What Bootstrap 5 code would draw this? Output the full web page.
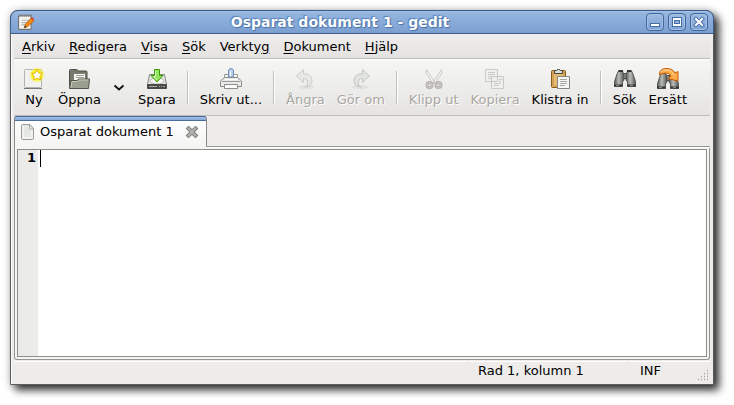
<!DOCTYPE html>
<html lang="sv">
<head>
<meta charset="utf-8">
<meta name="viewport" content="width=device-width, initial-scale=1">
<title>Osparat dokument 1 - gedit</title>
<link rel="stylesheet" href="https://cdn.jsdelivr.net/npm/bootstrap@5.3.0/dist/css/bootstrap.min.css">
<style>
body{background:#fff;color:#000;font:13px/16px "DejaVu Sans",sans-serif;padding:10px 20px 20px 10px}
button{font:inherit;color:inherit;background:none;border:0;padding:0}
svg{display:block}
.win{background:#edecea;border:1px solid #5c5c5c;border-radius:8px 8px 0 0;
  box-shadow:0 0 8px rgba(0,0,0,.22),5px 5px 9px rgba(0,0,0,.8)}
.titlebar{height:24px;margin:-1px -1px 0;padding:0 5px 0 7px;border:1px solid #3a5c8a;border-radius:8px 8px 0 0;
  background:linear-gradient(#a9c4e8 0,#95b5e0 2px,#7b9fd0);}
.titlebar h1{font-size:14px;line-height:22px;font-weight:700;color:#fff;text-shadow:0 0 1px #3f689f,1px 1px 1px #4a73ab,-1px -1px 1px #5d86bd}
.wbtn{width:18px;height:18px;border:1px solid #40669c;border-radius:4px;background:linear-gradient(#9dbbe3,#7fa3d4);box-shadow:inset 0 0 0 1px #a5c0e5}
.inner{padding:0 3px 0 2px;border:solid #fafaf9;border-width:0 0 0 1px}
.menubar{height:25px;padding:1px 0 0 1px;background:linear-gradient(#eeedec,#e4e3e1);border-bottom:1px solid #bdbbb8}
.menubar button{padding:0 7px}
.menubar u{text-underline-offset:2px}
.toolbar{height:57px;padding:8px 2px 0;background:linear-gradient(#f6f6f5,#e5e4e2);border-top:1px solid #fff;border-bottom:1px solid #bdbbb8}
.tool{height:40px;min-width:36px;padding:0 6px}
.tool:disabled{color:#aaa7a3;text-shadow:1px 1px 0 #fff}
.tool svg{width:24px;height:24px}
.drop{width:25px;height:40px}
.vline{width:2px;height:33px;margin:3px 5px 0;background:linear-gradient(90deg,#c2c0bd 50%,#fff 50%)}
.doctab{height:31px;width:193px;padding:0 6px 0 5px;border:1px solid #8d8b88;border-top-color:#45699b;border-bottom:0;
  border-radius:3px 3px 0 0;background:linear-gradient(#a3c0e8 0,#86a9da 3px,#4a6e9f 3px,#4a6e9f 4px,#fff 4px,#f4f4f3)}
.tabs-rest{border-bottom:1px solid #979592;box-shadow:0 1px #fff;margin-left:-1px}
.sheet{border:1px solid #979592;border-top:0;border-radius:0 0 3px 3px;padding:2px;background:#f5f5f4}
.view{border:1px solid #8f8d8a;height:calc(100vh - 197px);min-height:100px;background:#fff}
.gutter{width:20px;padding-right:2px;background:#ebebea;font-weight:700}
.view textarea{border:0;outline:0;resize:none;padding:0 2px;font:inherit}
.caret-bar{position:absolute;left:2px;top:0;width:1px;height:17px;background:#000}
.statusbar{height:24px;line-height:17px;padding-top:1px}
.cell{border-top:1px solid #fff;padding-left:10px;margin-left:2px}
.cell-pos{width:160px}
.cell-mode{width:80px}
</style>
<script src="https://cdn.jsdelivr.net/npm/bootstrap@5.3.0/dist/js/bootstrap.bundle.min.js"></script>
</head>
<body class="min-vh-100">
<div class="win">
  <header class="titlebar d-flex align-items-center">
    <svg width="16" height="16" viewBox="1 1 14 14" aria-hidden="true"><rect x="1.500" y="2.500" width="11" height="12" rx="1" fill="#f4f4f1" stroke="#77756f"/><path d="M2 2.500h11" stroke="#77756f" stroke-width="2" stroke-dasharray="1 1"/><path d="M4 6.500h7M4 8.500h6M4 10.500h4" stroke="#b6b6b2"/><path d="M6.500 13l1-3 5-5.500 2.500 2.500-5.500 5z" fill="#f98b13" stroke="#a34c00" stroke-width=".6"/><path d="M12.500 4.500l.8-.8 1.700 2-.8 1z" fill="#e43b2d"/><path d="M6.400 13.200l.8-2 1.200 1.200z" fill="#222"/></svg>
    <h1 class="flex-fill text-center m-0">Osparat dokument 1 - gedit</h1>
    <div class="d-flex gap-1">
      <button class="wbtn" aria-label="Minimera"><svg width="16" height="16" viewBox="0 0 16 16"><rect x="3.500" y="9.500" width="9" height="3" fill="#fff" stroke="#456ea8"/></svg></button>
      <button class="wbtn" aria-label="Maximera"><svg width="16" height="16" viewBox="0 0 16 16"><rect x="3" y="3" width="10" height="10" fill="#456ea8"/><rect x="4" y="4" width="8" height="8" fill="#fff"/><rect x="5.500" y="6.500" width="5" height="3" fill="#8fb0dc" stroke="#456ea8"/></svg></button>
      <button class="wbtn" aria-label="Stäng"><svg width="16" height="16" viewBox="0 0 16 16"><path d="M5 5l6 6M11 5l-6 6" stroke="#456ea8" stroke-width="4" stroke-linecap="square"/><path d="M5 5l6 6M11 5l-6 6" stroke="#fff" stroke-width="2.200" stroke-linecap="square"/></svg></button>
    </div>
  </header>
  <div class="inner">
    <nav class="menubar d-flex">
      <button><u>A</u>rkiv</button><button><u>R</u>edigera</button><button><u>V</u>isa</button><button><u>S</u>ök</button><button>Verkty<u>g</u></button><button><u>D</u>okument</button><button><u>H</u>jälp</button>
    </nav>
    <div class="toolbar d-flex text-nowrap" role="toolbar">
      <button class="tool d-flex flex-column align-items-center"><svg viewBox="0 0 24 24"><defs><radialGradient id="glow"><stop offset=".5" stop-color="#fff200"/><stop offset="1" stop-color="#fff200" stop-opacity="0"/></radialGradient></defs><rect x="2.500" y="1.500" width="17" height="18" rx="1" fill="#f1f2ef" stroke="#b3b5b0"/><path d="M2 20.500h18" stroke="#777"/><circle cx="15" cy="7" r="8" fill="url(#glow)"/><path d="M15 1.500l1.700 3.400 3.800.6-2.700 2.700.6 3.800-3.400-1.800-3.400 1.800.6-3.800-2.700-2.700 3.800-.6z" fill="#fff" stroke="#e1ba00"/></svg>Ny</button>
      <button class="tool d-flex flex-column align-items-center"><svg viewBox="0 0 24 24"><path d="M2.500 19V2.500q0-1 1-1h6q1 0 1.500 1.500h8q1 0 1 1V18z" fill="#767a6b" stroke="#4c5046"/><path d="M6.500 5.500h12v10h-12z" fill="#f7f7f4" stroke="#777b70"/><path d="M9 7.500h8M9 9.500h8" stroke="#9d9e98"/><path d="M2.500 20.500l1.500-8h6l2-1.500h10.500l-1 9.500z" fill="#9b9f8d" stroke="#50544a"/><path d="M4 19.500l1-6h5.500l2-1.500h9" fill="none" stroke="#c6c9ba"/></svg>Öppna</button>
      <button class="drop d-flex align-items-center justify-content-center" aria-label="Öppna senaste"><svg width="12" height="8" viewBox="0 0 12 8"><path d="M1.500 1.500l4.500 4 4.500-4" fill="none" stroke="#111" stroke-width="1.800"/></svg></button>
      <button class="tool d-flex flex-column align-items-center"><svg viewBox="0 0 24 24"><path d="M4.500 6.500h15l2 10h-19z" fill="#e5e6e3" stroke="#888a85"/><ellipse cx="12" cy="13" rx="7" ry="3" fill="#f7f7f6" stroke="#bbb"/><rect x="2" y="16" width="20" height="5" rx="1" fill="#474a47"/><path d="M4 18.500h8M14 18.500h1M16 18.500h1M18 18.500h2" stroke="#aaa"/><path d="M9.500 1.500h5v6h3.500L12 14 6 7.500h3.500z" fill="#91e45c" stroke="#3f9a08"/><path d="M10.500 3v5.500h-2l3.500 3.500" fill="none" stroke="#d6ffbd"/></svg>Spara</button>
      <span class="vline"></span>
      <button class="tool d-flex flex-column align-items-center"><svg viewBox="0 0 24 24"><path d="M9.500 9V3q0-2.500 2.500-2.500T14.500 3v6z" fill="#b9cdea" stroke="#7390bc"/><path d="M11.500 3v5" stroke="#fff"/><path d="M5.500 12V6.500H9M15 6.500h3.500V12" fill="#f7f7f6" stroke="#999b97"/><path d="M5.500 9.500h13l4 3.500v5.500h-21V13z" fill="#e9eae7" stroke="#8b8d88"/><path d="M3 13.500h18" stroke="#999"/><path d="M6 11.500h12" stroke="#fff"/><path d="M5.500 16.500h13v4h-13z" fill="#fafafa" stroke="#8b8d88"/></svg>Skriv ut...</button>
      <span class="vline"></span>
      <button disabled class="tool d-flex flex-column align-items-center"><svg viewBox="0 0 24 24"><ellipse cx="13" cy="19" rx="8" ry="2" fill="#e2e1df"/><path d="M10.500 1.500L3.500 8l7 6.500v-4q5-.5 4 7l-2.500 1.500q7-.5 7-6.500 0-6.500-8.500-7z" fill="#e8e9e4" stroke="#cbccc7"/></svg>Ångra</button>
      <button disabled class="tool d-flex flex-column align-items-center"><svg viewBox="0 0 24 24"><ellipse cx="11" cy="19" rx="8" ry="2" fill="#e2e1df"/><path d="M13.500 1.500l7 6.500-7 6.500v-4q-5-.5-4 7l2.500 1.500q-7-.5-7-6.500 0-6.500 8.500-7z" fill="#e1e4df" stroke="#c3c7c0"/></svg>Gör om</button>
      <span class="vline"></span>
      <button disabled class="tool d-flex flex-column align-items-center"><svg viewBox="0 0 24 24"><path d="M4.500 1.500l8.500 13-2 1L4 5zM19.500 1.500L11 14.500l2 1L20 5z" fill="#efefed" stroke="#c3c3c0" stroke-width=".8"/><g fill="none" stroke="#b5b1b1" stroke-width="3"><circle cx="7.500" cy="17" r="2.500"/><circle cx="16.500" cy="17" r="2.500"/></g><g fill="none" stroke="#d1cccc"><circle cx="7.500" cy="17" r="2.500"/><circle cx="16.500" cy="17" r="2.500"/></g></svg>Klipp ut</button>
      <button disabled class="tool d-flex flex-column align-items-center"><svg viewBox="0 0 24 24"><g fill="#efefed" stroke="#c9c9c6"><path d="M8.500 8.500h12v12h-12zM2.500 1.500h12v12h-12z"/><path d="M5 4.500h7M5 6.500h7M5 8.500h6M5 10.500h4M16 11.500h3M11 15.500h7M11 17.500h5M16 13.500h2"/></g></svg>Kopiera</button>
      <button class="tool d-flex flex-column align-items-center"><svg viewBox="0 0 24 24"><rect x="3.500" y="2.500" width="14" height="17" rx="1" fill="#d3a257" stroke="#8a5a14"/><path d="M6 4.500h9v13H6z" fill="#e4bb74"/><path d="M6.500 5.500v-3h2q0-1 2-1t2 1h2v3z" fill="#dededb" stroke="#444642"/><path d="M9.500 8.500h12v12h-12z" fill="#f5f5f3" stroke="#868883"/><path d="M12 11.500h7M12 13.500h7M12 15.500h7M12 17.500h5" stroke="#a7a9a5"/></svg>Klistra in</button>
      <span class="vline"></span>
      <button class="tool d-flex flex-column align-items-center"><svg viewBox="0 0 24 24"><defs><linearGradient id="tube"><stop stop-color="#565956"/><stop offset=".45" stop-color="#b9bcb7"/><stop offset="1" stop-color="#555855"/></linearGradient><g id="bino"><path d="M9.500 5.500h5v5h-5z" fill="#9a9d98" stroke="#4a4d4a"/><path d="M5.500 3h4l1.500 4v5l-1.500 2v4.500h-8v-5L4 6z" fill="url(#tube)" stroke="#454845" stroke-width=".8"/><path d="M18.500 3h-4L13 7v5l1.500 2v4.500h8v-5L20 6z" fill="url(#tube)" stroke="#454845" stroke-width=".8"/><path d="M5.500 3h4.500M14 3h4.500M1 17.500h8.500M14.500 17.500H23" stroke="#333533" stroke-width="2"/><path d="M3 17.500h3M17 17.500h3" stroke="#8a8d88"/></g></defs><use href="#bino"/></svg>Sök</button>
      <button class="tool d-flex flex-column align-items-center"><svg viewBox="0 0 24 24"><use href="#bino" y="2"/><path d="M3.500 6Q4 .5 10 .5q7 0 9 4.500l3-1.500v9.500l-10-2.500 3-2.500q-1.500-3-5-3-3.500 0-6.500 2z" fill="#fcae4c" stroke="#c95a05"/><path d="M5 4q2-2.500 5.500-2.300 5.500.5 7.500 5.300" fill="none" stroke="#ffd9a0"/></svg>Ersätt</button>
    </div>
    <div class="d-flex">
      <div class="doctab d-flex align-items-center">
        <svg width="16" height="16" viewBox="0 0 16 16" aria-hidden="true"><path d="M1.500 1.500q0-1 1-1H10l3.500 4v10q0 1-1 1h-10q-1 0-1-1z" fill="#e6e8e4" stroke="#9b9d98"/><path d="M3 2v12h9V6" fill="none" stroke="#fff"/><path d="M9.500 1v4h4z" fill="#fff" stroke="#aaa"/></svg>
        <span class="text-nowrap ms-1">Osparat dokument 1</span>
        <button class="ms-auto" aria-label="Stäng dokument"><svg width="16" height="16" viewBox="0 0 16 16"><path d="M4.500 4.500l7 7M11.500 4.500l-7 7" stroke="#7b7b77" stroke-width="4" stroke-linecap="square"/><path d="M4.500 4.500l7 7M11.500 4.500l-7 7" stroke="#b4b5b0" stroke-width="2" stroke-linecap="square"/></svg></button>
      </div>
      <div class="tabs-rest flex-fill"></div>
    </div>
    <div class="sheet">
      <div class="view d-flex">
        <div class="gutter text-end">1</div>
        <div class="position-relative flex-fill d-flex"><textarea class="flex-fill" aria-label="Dokumenttext"></textarea><span class="caret-bar"></span></div>
      </div>
    </div>
    <footer class="statusbar d-flex">
      <div class="cell flex-fill ms-0"></div>
      <div class="cell cell-pos">Rad 1, kolumn 1</div>
      <div class="cell cell-mode d-flex justify-content-between">INF<svg class="align-self-end" width="12" height="16" viewBox="0 -1 12 16" aria-hidden="true"><path d="M9 1.500h1M6 4.500h1M9 4.500h1M3 7.500h1M6 7.500h1M9 7.500h1M0 10.500h1M3 10.500h1M6 10.500h1M9 10.500h1" stroke="#a5a39f" stroke-width="1.500"/></svg></div>
    </footer>
  </div>
</div>
</body>
</html>
